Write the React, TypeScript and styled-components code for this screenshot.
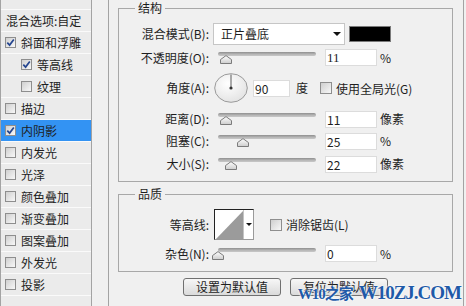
import styled, { createGlobalStyle } from 'styled-components'

const GlobalStyle = createGlobalStyle`
  html, body {
    margin: 0;
    padding: 0;
    background: #f0f0f0;
  }
  body {
    font-family: "Noto Sans CJK SC", "Liberation Sans", sans-serif;
    font-size: 12px;
    color: #1e1e1e;
  }
`

const Window = styled.div`
  position: relative;
  display: flex;
  width: 466px;
  height: 306px;
  overflow: hidden;
  background: #f0f0f0;
`

const Sidebar = styled.ul`
  list-style: none;
  margin: 0;
  padding: 0;
  width: 92px;
  box-sizing: border-box;
  height: 100%;
  border-left: 1px solid #a3a3a3;
  border-right: 1px solid #a3a3a3;
  background: #ebebeb;
  flex: none;
`

const Item = styled.li<{ $selected?: boolean; $indent?: boolean; $h?: number }>`
  display: flex;
  align-items: center;
  gap: 5px;
  height: ${(p) => p.$h ?? 21}px;
  border-bottom: 1px solid #fafafa;
  padding-left: ${(p) => (p.$indent ? 20 : 4)}px;
  background: ${(p) => (p.$selected ? '#3393f3' : 'transparent')};
  line-height: 14px;
  white-space: nowrap;
`

const Heading = styled.span`
  padding-left: 1px;
`

const Box = styled.span`
  display: inline-flex;
  align-items: center;
  justify-content: center;
  width: 11px;
  height: 11px;
  box-sizing: border-box;
  border: 1px solid #8e8e8e;
  background: linear-gradient(135deg, #cfcfcf 0%, #f8f8f8 100%);
  flex: none;
`

const Main = styled.section`
  margin-left: 16px;
  width: 356px;
  box-sizing: border-box;
  height: 100%;
  border-left: 1px solid #a3a3a3;
  border-right: 1px solid #a3a3a3;
  padding: 1px 10px 0 9px;
  flex: none;
`

const Group = styled.fieldset<{ $pb: number; $mt?: number }>`
  margin: ${(p) => p.$mt ?? 0}px 0 0 0;
  padding: 8px 0 ${(p) => p.$pb}px 0;
  border: 1px solid #a8a8a8;
  min-width: 0;
`

const Legend = styled.legend`
  margin-left: 16px;
  padding: 0 3px;
  line-height: 14px;
`

const Row = styled.div<{ $h: number; $mt?: number }>`
  display: flex;
  align-items: center;
  height: ${(p) => p.$h}px;
  margin-top: ${(p) => p.$mt ?? 0}px;
  white-space: nowrap;
`

const Label = styled.label`
  width: 90px;
  flex: none;
  text-align: right;
  line-height: 14px;
`

const Select = styled.div`
  margin-left: 4px;
  width: 132px;
  height: 22px;
  box-sizing: border-box;
  border: 1px solid #c6c6c6;
  background: #fff;
  display: flex;
  align-items: center;
  justify-content: space-between;
  padding: 0 3px 0 7px;
  line-height: 14px;
`

const Arrow = styled.span`
  width: 0;
  height: 0;
  border-left: 4px solid transparent;
  border-right: 4px solid transparent;
  border-top: 4px solid #111;
`

const Swatch = styled.div`
  margin-left: 4px;
  width: 42px;
  height: 16px;
  box-sizing: border-box;
  border: 1px solid #7a7a7a;
  background: #000;
`

const NumBox = styled.div<{ $w?: number; $ml?: number; $serif?: boolean }>`
  margin-left: ${(p) => p.$ml ?? 4}px;
  width: ${(p) => p.$w ?? 52}px;
  height: 17px;
  box-sizing: border-box;
  border: 1px solid #dcdcdc;
  background: #fff;
  padding-left: 1px;
  line-height: 15px;
  font-family: ${(p) => (p.$serif ? '"Liberation Serif", serif' : '"Noto Sans CJK SC", sans-serif')};
  font-size: ${(p) => (p.$serif ? 13 : 12)}px;
`

const Unit = styled.span<{ $ml?: number }>`
  margin-left: ${(p) => p.$ml ?? 3}px;
  line-height: 14px;
`

const Slider = styled.div`
  position: relative;
  margin-left: 4px;
  width: 108px;
  height: 12px;
  flex: none;
`

const Track = styled.div`
  position: absolute;
  left: 5px;
  right: 5px;
  top: 0;
  height: 4px;
  border-radius: 2px;
  background: linear-gradient(#8f8f8f, #b8b8b8 60%, #c8c8c8);
`

const ThumbIcon = styled.svg`
  position: absolute;
  top: 3px;
`

const DialIcon = styled.svg`
  margin-left: 5px;
  flex: none;
`

const Check = styled(Box)<{ $ml?: number }>`
  margin-left: ${(p) => p.$ml ?? 0}px;
  width: 12px;
  height: 12px;
  margin-right: 4px;
`

const ContourPick = styled.div`
  margin-left: 5px;
  display: flex;
  width: 40px;
  height: 31px;
  box-sizing: border-box;
  border: 1px solid;
  border-color: #222 #9a9a9a #9a9a9a #222;
  background: #fff;
`

const ContourArrow = styled.div`
  flex: 1;
  display: flex;
  align-items: center;
  justify-content: center;
  border-left: 1px solid #c4c4c4;
`

const SmallArrow = styled.span`
  width: 0;
  height: 0;
  border-left: 3px solid transparent;
  border-right: 3px solid transparent;
  border-top: 3px solid #111;
`

const Buttons = styled.div`
  display: flex;
  justify-content: center;
  gap: 9px;
  margin-top: 6px;
`

const Button = styled.button`
  width: 98px;
  height: 18px;
  padding: 0;
  border: 1px solid #707070;
  border-radius: 3px;
  background: linear-gradient(#f7f7f7, #dadada);
  font: inherit;
  font-size: 12px;
  line-height: 16px;
  color: #1e1e1e;
`

const Watermark = styled.div`
  position: absolute;
  right: 5px;
  bottom: 1px;
  font-family: "Liberation Serif", "Noto Sans CJK SC", serif;
  font-weight: bold;
  font-size: 19px;
  letter-spacing: -1px;
  line-height: 22px;
  color: #1f5aa8;
  text-shadow: 0 0 2px #fff, 0 0 2px #fff;
  white-space: nowrap;
`

const Small = styled.span`
  font-size: 15px;
  letter-spacing: -1px;
  margin-right: 6px;
`

function CheckMark() {
  return (
    <svg width="9" height="9" viewBox="0 0 9 9">
      <path d="M1.3 4.6 L3.6 7.1 L7.8 1.4" stroke="#24458f" strokeWidth="1.7" fill="none" />
    </svg>
  )
}

function Thumb({ pos }: { pos: number }) {
  return (
    <ThumbIcon width="12" height="9" viewBox="0 0 12 9" style={{ left: 5 + pos - 6 }}>
      <defs>
        <linearGradient id="tg" x1="0" y1="0" x2="0" y2="1">
          <stop offset="0" stopColor="#ffffff" />
          <stop offset="1" stopColor="#cdcdcd" />
        </linearGradient>
      </defs>
      <path d="M0.5 8.5 V4.6 L6 0.6 L11.5 4.6 V8.5 Z" fill="url(#tg)" stroke="#7b7b7b" />
    </ThumbIcon>
  )
}

function Dial() {
  return (
    <DialIcon width="34" height="30" viewBox="0 0 34 30">
      <defs>
        <radialGradient id="dg" cx="0.4" cy="0.35" r="0.7">
          <stop offset="0" stopColor="#ffffff" />
          <stop offset="1" stopColor="#e2e2e2" />
        </radialGradient>
      </defs>
      <ellipse cx="17" cy="15" rx="16.3" ry="14.3" fill="url(#dg)" stroke="#9a9a9a" />
      <line x1="17" y1="15" x2="17" y2="1.5" stroke="#5a5a5a" strokeWidth="1" />
      <circle cx="17" cy="15" r="1.6" fill="#333" />
    </DialIcon>
  )
}

const effects = [
  { name: '斜面和浮雕', on: true },
  { name: '等高线', on: true, indent: true },
  { name: '纹理', indent: true },
  { name: '描边' },
  { name: '内阴影', on: true, selected: true },
  { name: '内发光' },
  { name: '光泽' },
  { name: '颜色叠加' },
  { name: '渐变叠加' },
  { name: '图案叠加' },
  { name: '外发光' },
  { name: '投影' },
]

const sliders = [
  { label: '距离(D):', value: '11', unit: '像素', pos: 7.5, h: 22, mt: 4 },
  { label: '阻塞(C):', value: '25', unit: '%', pos: 25, h: 22, mt: 0 },
  { label: '大小(S):', value: '22', unit: '像素', pos: 13, h: 22, mt: 1 },
]

export default function App() {
  return (
    <Window>
      <GlobalStyle />
      <Sidebar>
        <Item $h={9} />
        <Item>
          <Heading>混合选项:自定</Heading>
        </Item>
        {effects.map((e) => (
          <Item key={e.name} $indent={e.indent} $selected={e.selected}>
            <Box>{e.on && <CheckMark />}</Box>
            {e.name}
          </Item>
        ))}
      </Sidebar>
      <Main>
        <Group $pb={6}>
          <Legend>结构</Legend>
          <Row $h={22}>
            <Label>混合模式(B):</Label>
            <Select>
              正片叠底
              <Arrow />
            </Select>
            <Swatch />
          </Row>
          <Row $h={21} $mt={2}>
            <Label>不透明度(O):</Label>
            <Slider>
              <Track />
              <Thumb pos={7.5} />
            </Slider>
            <NumBox $serif>11</NumBox>
            <Unit>%</Unit>
          </Row>
          <Row $h={32} $mt={4}>
            <Label>角度(A):</Label>
            <Dial />
            <NumBox $w={37} $ml={5}>90</NumBox>
            <Unit $ml={6}>度</Unit>
            <Check $ml={12} />
            使用全局光(G)
          </Row>
          {sliders.map((s) => (
            <Row key={s.label} $h={s.h} $mt={s.mt}>
              <Label>{s.label}</Label>
              <Slider>
                <Track />
                <Thumb pos={s.pos} />
              </Slider>
              <NumBox>{s.value}</NumBox>
              <Unit>{s.unit}</Unit>
            </Row>
          ))}
        </Group>
        <Group $pb={9} $mt={5}>
          <Legend>品质</Legend>
          <Row $h={31}>
            <Label>等高线:</Label>
            <ContourPick>
              <svg width="28" height="29" viewBox="0 0 28 29">
                <polygon points="1,29 28,1 28,29" fill="#9b9b9b" />
              </svg>
              <ContourArrow>
                <SmallArrow />
              </ContourArrow>
            </ContourPick>
            <Check $ml={16} />
            消除锯齿(L)
          </Row>
          <Row $h={17} $mt={5}>
            <Label>杂色(N):</Label>
            <Slider>
              <Track />
              <Thumb pos={0} />
            </Slider>
            <NumBox>0</NumBox>
            <Unit>%</Unit>
          </Row>
        </Group>
        <Buttons>
          <Button>设置为默认值</Button>
          <Button>复位为默认值</Button>
        </Buttons>
      </Main>
      <Watermark>
        <Small>W10之家</Small>W10ZJ.COM
      </Watermark>
    </Window>
  )
}
